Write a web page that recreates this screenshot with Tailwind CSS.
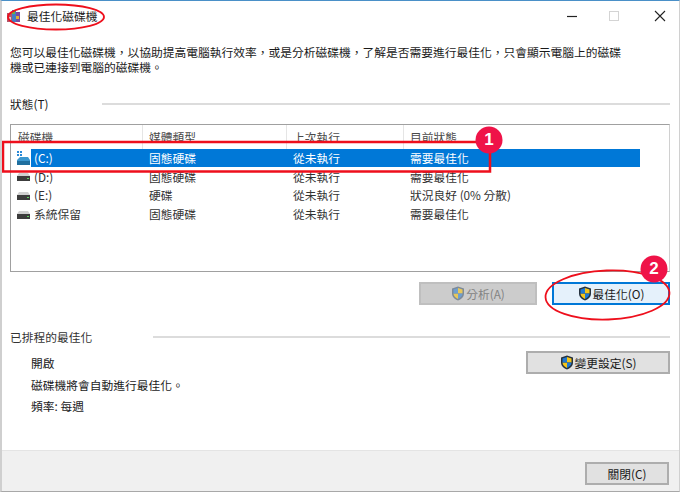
<!DOCTYPE html>
<html lang="zh-Hant">
<head>
<meta charset="UTF-8">
<title>最佳化磁碟機</title>
<script src="https://cdn.jsdelivr.net/npm/@tailwindcss/browser@4"></script>
</head>
<body class="bg-white">
<div class="relative w-[680px] h-[492px] overflow-hidden flex flex-col bg-white text-[11.75px] leading-[18px] text-[#1a1a1a] font-['Noto_Sans_CJK_TC','Liberation_Sans',sans-serif] border-t border-t-[#4a90c8] border-l-2 border-l-[#cfcfcf] border-r border-r-[#d0d0d0] border-b border-b-[#a8a8a8]">

  <!-- title bar -->
  <div class="h-[29px] shrink-0 flex items-center pl-[5px]">
    <svg class="w-[14px] h-[14px] shrink-0" viewBox="0 0 14 14">
      <rect x="0" y="4" width="5" height="9" fill="#b3566b"/>
      <rect x="5" y="1" width="4" height="12" fill="#3f7fc4"/>
      <rect x="9" y="3" width="4" height="10" fill="#7a4aa0"/>
      <rect x="5" y="2" width="3" height="3" fill="#6fb23f"/>
      <rect x="9" y="7" width="3" height="3" fill="#e0b030"/>
      <rect x="1" y="8" width="3" height="3" fill="#d8d0d0"/>
    </svg>
    <span class="ml-[6px]">最佳化磁碟機</span>
    <div class="ml-auto flex items-center">
      <svg class="w-[12px] h-[12px]" viewBox="0 0 12 12"><path d="M1 6.5h10" stroke="#222" stroke-width="1.2"/></svg>
      <svg class="w-[12px] h-[12px] ml-[30px]" viewBox="0 0 12 12"><rect x="1.5" y="1.5" width="9" height="9" fill="none" stroke="#d4d4d4"/></svg>
      <svg class="w-[12px] h-[12px] ml-[34px] mr-[13px]" viewBox="0 0 12 12"><path d="M1 1l10 10M11 1L1 11" stroke="#222" stroke-width="1.1"/></svg>
    </div>
  </div>

  <!-- body -->
  <div class="flex-1 flex flex-col pl-[8px] pr-[9px]">
    <p class="mt-[14px] w-[620px] leading-[15px]">您可以最佳化磁碟機，以協助提高電腦執行效率，或是分析磁碟機，了解是否需要進行最佳化，只會顯示電腦上的磁碟機或已連接到電腦的磁碟機。</p>

    <div class="mt-[21px] flex items-center h-[18px]">
      <span>狀態(T)</span>
      <div class="ml-auto w-[568px] h-[2px] bg-[#dcdcdc]"></div>
    </div>

    <!-- drive list -->
    <div class="mt-[11px] h-[148px] border border-[#a0a0a0] border-r-[#d0d0d0] flex flex-col">
      <div class="h-[24px] shrink-0 grid grid-cols-[132px_144px_117px_1fr] items-center text-[#4a4a4a]">
        <div class="pl-[7px] h-full flex items-center border-r border-[#e5e5e5]">磁碟機</div>
        <div class="pl-[6px] h-full flex items-center border-r border-[#e5e5e5]">媒體類型</div>
        <div class="pl-[6px] h-full flex items-center border-r border-[#e5e5e5]">上次執行</div>
        <div class="pl-[6px] h-full flex items-center">目前狀態</div>
      </div>

      <div class="h-[18px] w-[629px] shrink-0 grid grid-cols-[20px_112px_144px_117px_1fr] items-center text-white">
        <div class="h-full bg-white flex items-center pl-[5px]">
          <svg class="w-[15px] h-[15px]" viewBox="0 0 15 15">
            <rect x="1" y="0" width="2" height="2" fill="#2a8ad8"/><rect x="4" y="0" width="2" height="2" fill="#2a8ad8"/>
            <rect x="1" y="3" width="2" height="2" fill="#2a8ad8"/><rect x="4" y="3" width="2" height="2" fill="#2a8ad8"/>
            <path d="M2 8l2-2h8l2 3v4H1V9z" fill="#3b97cf"/><rect x="1" y="10" width="13" height="4" fill="#1f6f9f"/>
          </svg>
        </div>
        <div class="h-full bg-[#0078d7] flex items-center pl-[3px]">(C:)</div>
        <div class="h-full bg-[#0078d7] flex items-center pl-[6px]">固態硬碟</div>
        <div class="h-full bg-[#0078d7] flex items-center pl-[6px]">從未執行</div>
        <div class="h-full bg-[#0078d7] flex items-center pl-[6px]">需要最佳化</div>
      </div>

      <div class="mt-[0.7px] h-[18px] shrink-0 grid grid-cols-[20px_112px_144px_117px_1fr] items-center text-[#333]">
        <div class="pl-[6px]"><svg class="w-[13px] h-[9px]" viewBox="0 0 13 9"><path d="M2 1h9l2 3v5H0V4z" fill="#d0d0d0"/><rect y="4" width="13" height="5" fill="#3c3c3c"/><rect x="10" y="6" width="2" height="1" fill="#5fd35f"/></svg></div>
        <div class="pl-[3px]">(D:)</div><div class="pl-[6px]">固態硬碟</div><div class="pl-[6px]">從未執行</div><div class="pl-[6px]">需要最佳化</div>
      </div>
      <div class="mt-[0.7px] h-[18px] shrink-0 grid grid-cols-[20px_112px_144px_117px_1fr] items-center text-[#333]">
        <div class="pl-[6px]"><svg class="w-[13px] h-[9px]" viewBox="0 0 13 9"><path d="M2 1h9l2 3v5H0V4z" fill="#d0d0d0"/><rect y="4" width="13" height="5" fill="#3c3c3c"/><rect x="10" y="6" width="2" height="1" fill="#5fd35f"/></svg></div>
        <div class="pl-[3px]">(E:)</div><div class="pl-[6px]">硬碟</div><div class="pl-[6px]">從未執行</div><div class="pl-[6px]">狀況良好 (0% 分散)</div>
      </div>
      <div class="mt-[0.7px] h-[18px] shrink-0 grid grid-cols-[20px_112px_144px_117px_1fr] items-center text-[#333]">
        <div class="pl-[6px]"><svg class="w-[13px] h-[9px]" viewBox="0 0 13 9"><path d="M2 1h9l2 3v5H0V4z" fill="#d0d0d0"/><rect y="4" width="13" height="5" fill="#3c3c3c"/><rect x="10" y="6" width="2" height="1" fill="#5fd35f"/></svg></div>
        <div class="pl-[3px]">系統保留</div><div class="pl-[6px]">固態硬碟</div><div class="pl-[6px]">從未執行</div><div class="pl-[6px]">需要最佳化</div>
      </div>
    </div>

    <!-- actions -->
    <div class="mt-[10px] flex justify-end gap-[15px]">
      <div class="w-[118px] h-[23px] flex items-center justify-center gap-[1px] bg-[#cccccc] border-2 border-[#bfbfbf] text-[#838383]">
        <svg class="w-[14px] h-[15px]" viewBox="0 0 14 15"><path d="M7 0.5l6 2v5c0 3.500-3 6-6 7-3-1-6-3.500-6-7v-5z" fill="#7d8a99"/><path d="M7 2l4.500 1.500V7.500H7zM7 7.500v5.500c-2.500-1-4.500-3-4.500-5.500z" fill="#e8c85a"/><path d="M7 2v5.500H2.500v-4zM7 7.500h4.500C11.300 10 9.500 12 7 13z" fill="#6f9fd0"/></svg>
        <span>分析(A)</span>
      </div>
      <div class="w-[118px] h-[23px] flex items-center justify-center gap-[1px] bg-[#e5f1fb] border-2 border-[#0078d7] text-[#1a1a1a]">
        <svg class="w-[14px] h-[15px]" viewBox="0 0 14 15"><path d="M7 0.500l6 2v5c0 3.500-3 6-6 7-3-1-6-3.500-6-7v-5z" fill="#26323f"/><path d="M7 2l4.500 1.500V7.500H7zM7 7.500v5.500c-2.500-1-4.500-3-4.500-5.500z" fill="#f5c518"/><path d="M7 2v5.500H2.500v-4zM7 7.500h4.500C11.300 10 9.500 12 7 13z" fill="#1f78d1"/></svg>
        <span>最佳化(O)</span>
      </div>
    </div>

    <!-- schedule -->
    <div class="mt-[23px] flex items-center h-[18px]">
      <span class="text-[#333]">已排程的最佳化</span>
      <div class="ml-auto w-[517px] h-[2px] bg-[#dcdcdc]"></div>
    </div>
    <div class="mt-[5px] flex justify-between items-start">
      <div class="pl-[21px] pt-[3px] flex flex-col gap-[3.500px]">
        <span>開啟</span>
        <span>磁碟機將會自動進行最佳化。</span>
        <span>頻率: 每週</span>
      </div>
      <div class="w-[144px] h-[23px] flex items-center justify-center gap-[1px] bg-[#e1e1e1] border-2 border-[#adadad]">
        <svg class="w-[14px] h-[15px]" viewBox="0 0 14 15"><path d="M7 0.500l6 2v5c0 3.500-3 6-6 7-3-1-6-3.500-6-7v-5z" fill="#26323f"/><path d="M7 2l4.500 1.500V7.500H7zM7 7.500v5.500c-2.500-1-4.500-3-4.500-5.500z" fill="#f5c518"/><path d="M7 2v5.500H2.500v-4zM7 7.500h4.500C11.300 10 9.500 12 7 13z" fill="#1f78d1"/></svg>
        <span>變更設定(S)</span>
      </div>
    </div>
  </div>

  <!-- footer -->
  <div class="h-[41px] shrink-0 bg-[#f0f0f0] border-t border-[#e4e4e4] flex items-start justify-end pt-[11px] pr-[10px]">
    <div class="w-[84px] h-[23px] flex items-center justify-center bg-[#e1e1e1] border-2 border-[#adadad]">關閉(C)</div>
  </div>

  <!-- annotations over the screenshot -->
  <svg class="absolute top-[-1px] left-[-2px] w-[680px] h-[492px] pointer-events-none" viewBox="0 0 680 492">
    <ellipse cx="56" cy="17" rx="48" ry="12.500" fill="none" stroke="#ee0f1c" stroke-width="1.800"/>
    <path d="M491 142H3V171.500H490V142" fill="none" stroke="#ee0f1c" stroke-width="2.500"/>
    <ellipse cx="607.500" cy="295" rx="62" ry="24.500" transform="rotate(-2 607.500 295)" fill="none" stroke="#ee0f1c" stroke-width="1.800"/>
    <circle cx="489" cy="140" r="13.500" fill="#ef1348"/>
    <circle cx="654" cy="269" r="13.500" fill="#ef1348"/>
  </svg>
  <span class="absolute left-[480px] top-[129px] w-[14px] text-center text-white font-bold text-[17px] leading-[20px] font-['Liberation_Sans',sans-serif]">1</span>
  <span class="absolute left-[645px] top-[258px] w-[14px] text-center text-white font-bold text-[17px] leading-[20px] font-['Liberation_Sans',sans-serif]">2</span>
</div>
</body>
</html>
